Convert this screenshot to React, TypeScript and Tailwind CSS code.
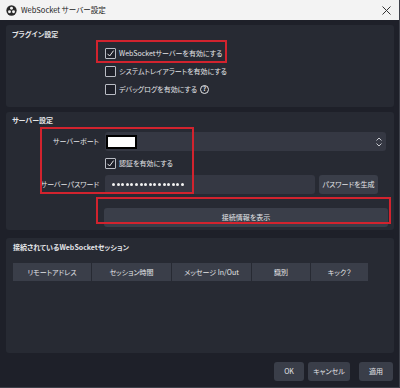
import React from "react";

const font = { fontFamily: '"Noto Sans CJK JP", "Noto Sans", sans-serif', fontFeatureSettings: '"palt"' };

function Check({ checked }: { checked?: boolean }) {
    return (
        <span className="w-[11px] h-[11px] border border-[#b9bcc4] rounded-[1px] flex items-center justify-center bg-[#1e2029] shrink-0">
            {checked && (
                <svg width="9" height="9" viewBox="0 0 9 9">
                    <path d="M1.5 4.8 L3.6 7 L7.6 1.6" fill="none" stroke="#e6e7ea" strokeWidth="1" />
                </svg>
            )}
        </span>
    );
}

function CheckRow({ label, checked, help }: { label: string; checked?: boolean; help?: boolean }) {
    return (
        <div className="flex items-center gap-[3px] h-[18px]">
            <Check checked={checked} />
            <span className="text-[7px] text-[#e4e5e8] whitespace-nowrap">{label}</span>
            {help && (
                <span className="w-[9px] h-[9px] rounded-full border border-[#e4e5e8] text-[6px] leading-none font-bold text-[#e4e5e8] flex items-center justify-center">?</span>
            )}
        </div>
    );
}

const btn = "h-[19px] bg-[#3a3e49] rounded-[3px] text-[7px] text-[#e4e5e8] whitespace-nowrap";

export default function App() {
    return (
        <div style={font} className="w-[400px] h-[388px] bg-[#1e2029] border-r border-b border-[#3e414a] flex flex-col overflow-hidden">
            {/* タイトルバー */}
            <div className="h-[20px] bg-[#f3f3f3] flex items-center pl-[6px] pr-[6px] shrink-0">
                <svg width="11" height="11" viewBox="0 0 12 12">
                    <circle cx="6" cy="6" r="5.6" fill="#2a2a2a" />
                    <circle cx="6" cy="3.6" r="1.6" fill="#f3f3f3" />
                    <circle cx="3.8" cy="7.4" r="1.6" fill="#f3f3f3" />
                    <circle cx="8.2" cy="7.4" r="1.6" fill="#f3f3f3" />
                </svg>
                <span className="ml-[4px] text-[7.5px] text-[#1a1a1a]">WebSocket サーバー設定</span>
                <svg className="ml-auto mr-[2px]" width="9" height="9" viewBox="0 0 9 9">
                    <path d="M0.5 0.5 L8.5 8.5 M8.5 0.5 L0.5 8.5" stroke="#333" strokeWidth="1" />
                </svg>
            </div>

            <div className="flex flex-col pl-[6px] pr-[5px] pt-[5px]">
                {/* プラグイン設定 */}
                <div className="h-[82px] bg-[#272a33] rounded-[3px] pt-[3px] pl-[6px]">
                    <div className="text-[7px] font-bold text-[#e4e5e8] h-[12px] leading-[12px]">プラグイン設定</div>
                    <div className="pl-[93px] mt-[4px] flex flex-col">
                        <div className="relative">
                            <div className="absolute left-[-9px] top-[-4px] w-[131px] h-[23px] border-2 border-[#d2232e]" />
                            <CheckRow label="WebSocketサーバーを有効にする" checked />
                        </div>
                        <CheckRow label="システムトレイアラートを有効にする" />
                        <CheckRow label="デバッグログを有効にする" help />
                    </div>
                </div>

                {/* サーバー設定 */}
                <div className="h-[118px] mt-[5px] bg-[#272a33] rounded-[3px] pt-[2px] pl-[6px] pr-[6px]">
                    <div className="text-[7px] font-bold text-[#e4e5e8] h-[12px] leading-[12px]">サーバー設定</div>
                    <div className="relative mt-[6px]">
                        <div className="absolute left-[28px] top-[-5px] w-[154px] h-[67px] border-2 border-[#d2232e]" />
                        <div className="flex items-center h-[19px]">
                            <span className="w-[93px] text-right pr-[6px] text-[7px] text-[#e4e5e8] whitespace-nowrap">サーバーポート</span>
                            <div className="flex-1 mr-[2px] h-[19px] bg-[#353843] rounded-[3px] flex items-center pl-[1px] pr-[4px]">
                                <div className="w-[31px] h-[14px] bg-white border-2 border-black" />
                                <div className="ml-auto flex flex-col items-center">
                                    <svg width="6" height="4" viewBox="0 0 6 4"><path d="M0.5 3.5 L3 1 L5.5 3.5" fill="none" stroke="#c9cbd1" strokeWidth="1" /></svg>
                                    <svg width="6" height="4" viewBox="0 0 6 4" className="mt-[2px]"><path d="M0.5 0.5 L3 3 L5.5 0.5" fill="none" stroke="#c9cbd1" strokeWidth="1" /></svg>
                                </div>
                            </div>
                        </div>
                        <div className="flex items-center h-[24px] pl-[93px]">
                            <CheckRow label="認証を有効にする" checked />
                        </div>
                        <div className="flex items-center h-[19px]">
                            <span className="w-[93px] text-right pr-[6px] text-[7px] text-[#e4e5e8] whitespace-nowrap">サーバーパスワード</span>
                            <div className="w-[210px] h-[19px] bg-[#353843] rounded-[3px] flex items-center pl-[7px] gap-[1.6px]">
                                {Array.from({ length: 16 }).map((_, i) => (
                                    <span key={i} className="w-[3px] h-[3px] rounded-full bg-[#f2f2f2]" />
                                ))}
                            </div>
                            <button className={`${btn} ml-[4px] w-[59px]`}>パスワードを生成</button>
                        </div>
                    </div>
                    <div className="relative mt-[7px] ml-[92px]">
                        <div className="absolute left-[-8px] top-[-4px] right-[-3px] h-[27px] border-2 border-[#d2232e]" />
                        <button className={`${btn} w-full`}>接続情報を表示</button>
                    </div>
                </div>

                {/* セッション */}
                <div className="h-[115px] mt-[8px] bg-[#272a33] rounded-[3px] pt-[3px] pl-[7px]">
                    <div className="text-[7px] font-bold text-[#e4e5e8] h-[12px] leading-[12px]">接続されているWebSocketセッション</div>
                    <div className="flex mt-[10px] h-[18px] gap-[1px]">
                        {[
                            ["リモートアドレス", "w-[78px]"],
                            ["セッション時間", "w-[79px]"],
                            ["メッセージ In/Out", "w-[79px]"],
                            ["識別", "w-[58px]"],
                            ["キック？", "w-[57px]"],
                        ].map(([t, w]) => (
                            <div key={t} className={`${w} bg-[#3a3e49] flex items-center justify-center text-[7px] text-[#e4e5e8] whitespace-nowrap`}>{t}</div>
                        ))}
                    </div>
                </div>

                {/* ボタン */}
                <div className="flex justify-end gap-[4px] mt-[9px] pr-[1px]">
                    <button className={`${btn} w-[30px]`}>OK</button>
                    <button className={`${btn} w-[42px]`}>キャンセル</button>
                    <button className={`${btn} w-[34px] ml-[5px]`}>適用</button>
                </div>
            </div>
        </div>
    );
}
